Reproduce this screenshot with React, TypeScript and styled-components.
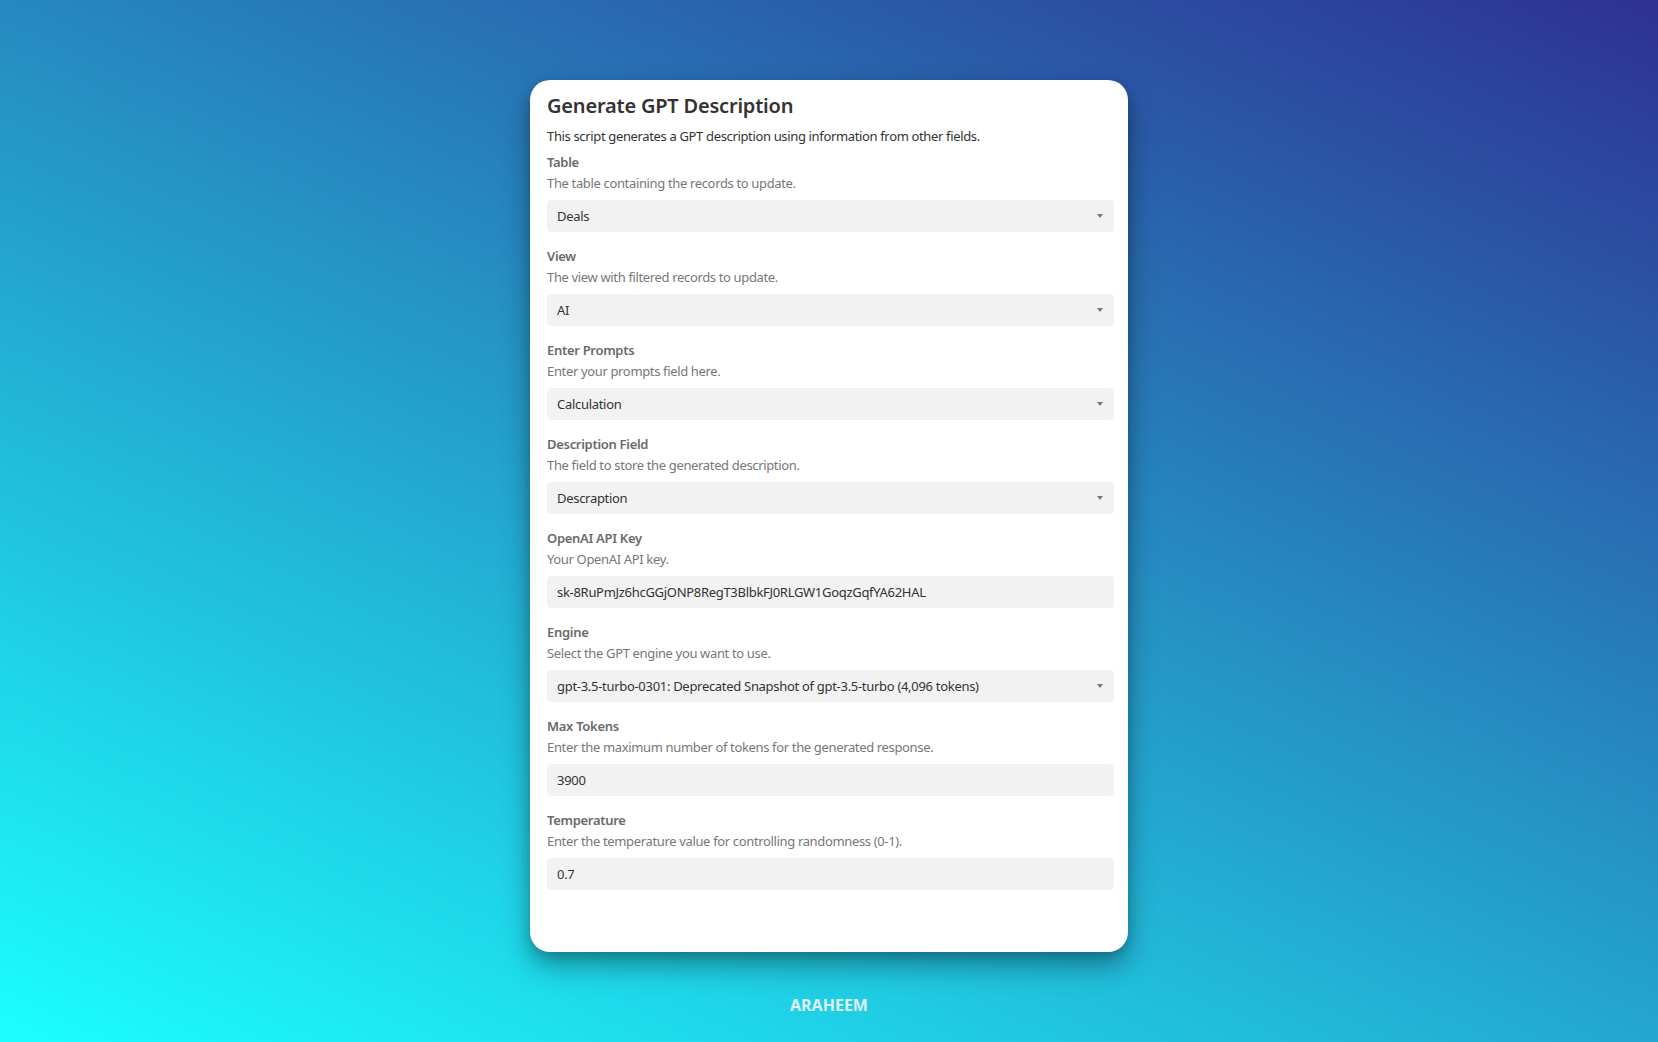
import React from "react";
import styled, { createGlobalStyle } from "styled-components";

const GlobalStyle = createGlobalStyle`
  * { box-sizing: border-box; }
  html, body { margin: 0; padding: 0; }
  body {
    min-height: 100vh;
    font-family: "Noto Sans", "Open Sans", Arial, sans-serif;
    background: linear-gradient(25deg, #1bffff 0%, #2e3192 100%);
    background-attachment: fixed;
  }
`;

const Page = styled.div`
  min-height: 100vh;
  display: flex;
  flex-direction: column;
  align-items: center;
  padding-top: 80px;
`;

const Card = styled.div`
  width: 598px;
  background: #ffffff;
  border-radius: 20px;
  padding: 12px 14px 62px 17px;
  box-shadow: 0 14px 28px rgba(0, 0, 0, 0.35), 0 4px 10px rgba(0, 0, 0, 0.15);
  display: flex;
  flex-direction: column;
`;

const Title = styled.h2`
  margin: 0;
  font-size: 20px;
  line-height: 28px;
  font-weight: 600;
  letter-spacing: -0.2px;
  color: #333333;
`;

const Intro = styled.p`
  margin: 6px 0 0;
  font-size: 13px;
  line-height: 20px;
  letter-spacing: -0.35px;
  color: #333333;
`;

const Group = styled.div<{ $first?: boolean }>`
  display: flex;
  flex-direction: column;
  margin-top: ${(p) => (p.$first ? "6px" : "14px")};
`;

const Label = styled.label`
  font-size: 13px;
  line-height: 21px;
  font-weight: 600;
  letter-spacing: -0.3px;
  color: #6a6a6a;
`;

const Help = styled.div`
  font-size: 13px;
  line-height: 20px;
  letter-spacing: -0.35px;
  color: #777777;
`;

const SelectBox = styled.div`
  margin-top: 7px;
  height: 32px;
  border-radius: 4px;
  background: #f2f2f2;
  display: flex;
  align-items: center;
  justify-content: space-between;
  padding: 0 11px 0 10px;
  font-size: 13px;
  letter-spacing: -0.3px;
  color: #333333;
`;

const Arrow = styled.span`
  width: 0;
  height: 0;
  border-left: 3px solid transparent;
  border-right: 3px solid transparent;
  border-top: 4px solid #777777;
`;

const TextInput = styled.input`
  margin-top: 7px;
  height: 32px;
  width: 100%;
  border: none;
  outline: none;
  border-radius: 4px;
  background: #f2f2f2;
  padding: 0 10px;
  font-family: inherit;
  font-size: 13px;
  letter-spacing: -0.3px;
  color: #333333;
`;

const Footer = styled.div`
  margin-top: 43px;
  font-size: 16px;
  line-height: 20px;
  font-weight: 700;
  color: rgba(240, 246, 250, 0.92);
`;

type Field = {
  label: string;
  help: string;
  value: string;
  kind: "select" | "input";
};

const fields: Field[] = [
  { label: "Table", help: "The table containing the records to update.", value: "Deals", kind: "select" },
  { label: "View", help: "The view with filtered records to update.", value: "AI", kind: "select" },
  { label: "Enter Prompts", help: "Enter your prompts field here.", value: "Calculation", kind: "select" },
  { label: "Description Field", help: "The field to store the generated description.", value: "Descraption", kind: "select" },
  { label: "OpenAI API Key", help: "Your OpenAI API key.", value: "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", kind: "input" },
  { label: "Engine", help: "Select the GPT engine you want to use.", value: "gpt-3.5-turbo-0301: Deprecated Snapshot of gpt-3.5-turbo (4,096 tokens)", kind: "select" },
  { label: "Max Tokens", help: "Enter the maximum number of tokens for the generated response.", value: "3900", kind: "input" },
  { label: "Temperature", help: "Enter the temperature value for controlling randomness (0-1).", value: "0.7", kind: "input" },
];

export default function App() {
  return (
    <>
      <GlobalStyle />
      <Page>
        <Card>
          <Title>Generate GPT Description</Title>
          <Intro>This script generates a GPT description using information from other fields.</Intro>
          {fields.map((f, i) => (
            <Group key={f.label} $first={i === 0}>
              <Label>{f.label}</Label>
              <Help>{f.help}</Help>
              {f.kind === "select" ? (
                <SelectBox>
                  <span>{f.value}</span>
                  <Arrow />
                </SelectBox>
              ) : (
                <TextInput defaultValue={f.value} readOnly />
              )}
            </Group>
          ))}
        </Card>
        <Footer>ARAHEEM</Footer>
      </Page>
    </>
  );
}
